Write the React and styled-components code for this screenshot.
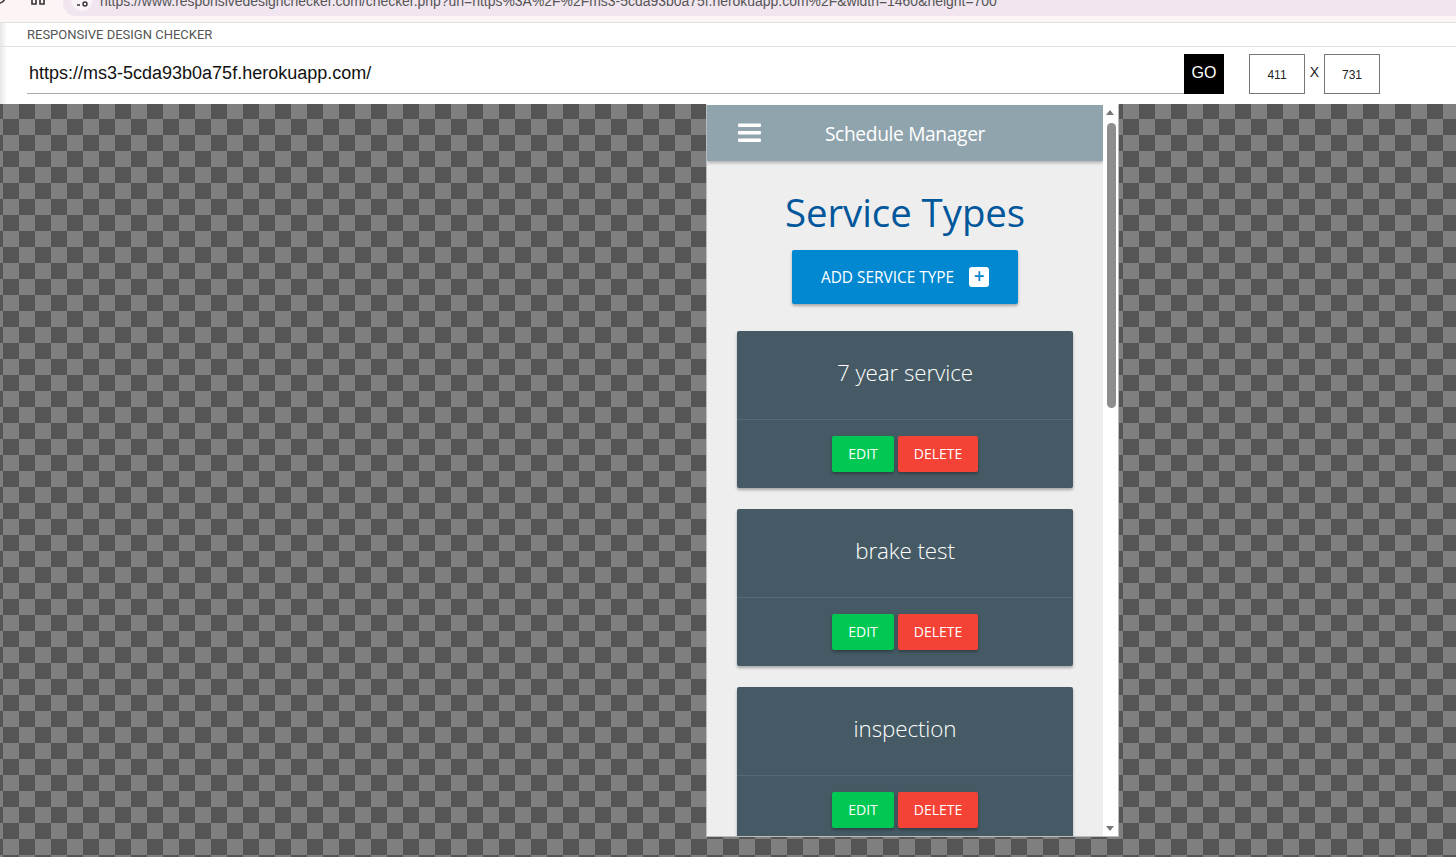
import React from "react";
import styled, { createGlobalStyle } from "styled-components";

const Global = createGlobalStyle`
  html, body { margin: 0; padding: 0; height: 857px; overflow: hidden; background: #fff; }
  #root { height: 857px; }
  * { box-sizing: border-box; }
`;

const Page = styled.div`
  width: 1456px; height: 857px; display: flex; flex-direction: column; overflow: hidden;
  font-family: "Liberation Sans", Arial, sans-serif;
`;
const BrowserBar = styled.div`
  height: 23px; flex: none; display: flex; align-items: flex-end; background: #fdf4f6; border-bottom: 1px solid #e2dfe0;
  padding: 0 0 6px 0; overflow: hidden;
`;
const ReloadIcon = styled.svg` width: 14px; height: 14px; flex: none; margin: 0 0 12px -8px; color: #333; `;
const HomeIcon = styled.svg` width: 14px; height: 14px; flex: none; margin: 0 0 11px 25px; color: #333; `;
const UrlPill = styled.div`
  flex: 1; height: 26px; margin-left: 18px; background: #f1e5ef; border-radius: 13px 0 0 13px; display: flex; align-items: center;
  padding: 0 0 4px 8px; color: #555; font-size: 13.95px; white-space: nowrap; overflow: hidden;
`;
const SiteChip = styled.span`
  width: 22px; height: 24px; flex: none; border-radius: 50%; background: #f9f2f7; margin: -4px 7px 0 0; display: flex; align-items: center; justify-content: center;
`;
const TuneIcon = styled.svg` width: 12px; height: 12px; color: #333; margin-top: 6px; `;
const CheckerTitle = styled.div`
  height: 24px; flex: none; border-bottom: 1px solid #e0e0e0; padding-left: 27px;
  background: linear-gradient(90deg, #e6e6e6, #fff 7px);
  font-family: Roboto, "Liberation Sans", sans-serif; font-size: 13px; line-height: 24px; color: #555;
`;
const Controls = styled.div`
  height: 57px; flex: none; display: flex; padding: 7px 0 0 27px; align-items: flex-start;
  background: linear-gradient(90deg, #e6e6e6, #fff 7px);
`;
const UrlField = styled.div`
  width: 1157px; height: 40px; border-bottom: 1px solid #aaa; padding-left: 2px; font-size: 18px; line-height: 38px; color: #111;
`;
const GoButton = styled.div`
  width: 40px; height: 40px; background: #000; color: #fff; font-size: 16px; text-align: center; line-height: 38px;
`;
const SizeBox = styled.div`
  width: 56px; height: 40px; border: 1px solid #777; font-size: 12px; text-align: center; line-height: 40px; color: #222;
  margin-left: ${p => p.$ml || 0}px;
`;
const Times = styled.span` width: 19px; text-align: center; font-size: 14px; line-height: 37px; color: #222; `;
const Stage = styled.div`
  flex: 1; display: flex; align-items: flex-start; padding-left: 706px; background-color: #7f7f7f;
  background-image: conic-gradient(#7f7f7f 25%, #555 0 50%, #7f7f7f 0 75%, #555 0);
  background-size: 32px 32px; background-position: 19px 103px; background-attachment: fixed;
`;
const DeviceFrame = styled.div`
  width: 413px; height: 733px; border: 1px solid #b9bcbf; border-top: 1px solid #fff; background: #fff; display: flex; overflow: hidden;
`;
const AppView = styled.div`
  width: 396px; flex: none; background: #eee; overflow: hidden; font-family: "Open Sans", "Noto Sans", sans-serif;
`;
const Header = styled.div`
  height: 56px; background: #90a4ae; display: flex; align-items: center; padding-left: 31px; position: relative;
  box-shadow: 0 2px 3px rgba(0,0,0,.25);
`;
const Burger = styled.svg` width: 23px; height: 20px; color: #fff; `;
const Brand = styled.div`
  flex: 1; text-align: center; color: #fff; font-size: 19.2px; letter-spacing: -0.35px; margin-left: -54px;
`;
const Main = styled.div` display: flex; flex-direction: column; align-items: center; padding-top: 25px; `;
const Title = styled.h1`
  margin: 0; height: 64px; font-size: 38.4px; font-weight: 400; line-height: 52px; color: #01579b; letter-spacing: -0.05px;
  font-family: "Open Sans", sans-serif;
`;
const AddButton = styled.div`
  width: 226px; height: 54px; background: #0288d1; color: #fff; border-radius: 2px; display: flex; align-items: center; justify-content: center; gap: 15px;
  font-size: 15.4px; box-shadow: 0 2px 3px rgba(0,0,0,.3); margin-bottom: 27px;
`;
const PlusBox = styled.span`
  width: 20px; height: 20px; background: #fff; border-radius: 3px; color: #0288d1; font-size: 19px; line-height: 19px; text-align: center; font-weight: 600;
`;
const Card = styled.div`
  width: 336px; flex: none; height: 157px; background: #455a64; border-radius: 2px; margin-bottom: 21px; box-shadow: 0 2px 3px rgba(0,0,0,.3);
  display: flex; flex-direction: column;
`;
const CardName = styled.div`
  height: 89px; border-bottom: 1px solid #566b75; color: #fff; text-align: center; font-size: 22.4px; font-weight: 300; line-height: 84px; letter-spacing: -0.1px;
`;
const CardActions = styled.div` flex: 1; display: flex; justify-content: center; padding-top: 16px; gap: 4px; `;
const ActionButton = styled.div`
  height: 36px; width: ${p => p.$w}px; background: ${p => p.$bg}; color: #fff; border-radius: 2px; text-align: center; line-height: 36px; font-size: 14px;
  box-shadow: 0 2px 3px rgba(0,0,0,.3);
`;
const ScrollTrack = styled.div`
  width: 15px; flex: none; background: #fff; display: flex; flex-direction: column; align-items: center; position: relative;
`;
const ScrollThumb = styled.div` width: 9px; height: 285px; background: #8e8e8e; border-radius: 5px; margin-top: 18px; margin-left: 1px; `;
const Arrow = styled.div`
  position: absolute; ${p => p.$down ? "bottom: 5px;" : "top: 5px;"} left: 3px; width: 0; height: 0; border-left: 4px solid transparent; border-right: 4px solid transparent;
  ${p => p.$down ? "border-top: 5px solid #777;" : "border-bottom: 5px solid #777;"}
`;

const services = ["7 year service", "brake test", "inspection"];

export default function App() {
  return (
    <Page>
      <Global />
      <BrowserBar>
        <ReloadIcon viewBox="0 0 14 14" fill="none" stroke="currentColor" strokeWidth="1.5"><circle cx="7" cy="7" r="6" /></ReloadIcon>
        <HomeIcon viewBox="0 0 14 14" fill="none" stroke="currentColor" strokeWidth="1.6"><path d="M1 6.5L7 1l6 5.5V13H9V8H5v5H1z" /></HomeIcon>
        <UrlPill>
          <SiteChip>
            <TuneIcon viewBox="0 0 12 12" fill="none" stroke="currentColor" strokeWidth="1.4"><path d="M1 3h6M1 9h3" /><circle cx="9" cy="8" r="2" /></TuneIcon>
          </SiteChip>
          https://www.responsivedesignchecker.com/checker.php?url=https%3A%2F%2Fms3-5cda93b0a75f.herokuapp.com%2F&width=1460&height=700
        </UrlPill>
      </BrowserBar>
      <CheckerTitle>RESPONSIVE DESIGN CHECKER</CheckerTitle>
      <Controls>
        <UrlField>https://ms3-5cda93b0a75f.herokuapp.com/</UrlField>
        <GoButton>GO</GoButton>
        <SizeBox $ml={25}>411</SizeBox>
        <Times>X</Times>
        <SizeBox>731</SizeBox>
      </Controls>
      <Stage>
        <DeviceFrame>
          <AppView>
            <Header>
              <Burger viewBox="0 0 23 20" fill="currentColor"><rect y="0.5" width="23" height="3.6" rx="1" /><rect y="8" width="23" height="3.6" rx="1" /><rect y="15.5" width="23" height="3.6" rx="1" /></Burger>
              <Brand>Schedule Manager</Brand>
            </Header>
            <Main>
              <Title>Service Types</Title>
              <AddButton>ADD SERVICE TYPE <PlusBox>+</PlusBox></AddButton>
              {services.map(s => (
                <Card key={s}>
                  <CardName>{s}</CardName>
                  <CardActions>
                    <ActionButton $w={62} $bg="#00c853">EDIT</ActionButton>
                    <ActionButton $w={80} $bg="#f44336">DELETE</ActionButton>
                  </CardActions>
                </Card>
              ))}
            </Main>
          </AppView>
          <ScrollTrack>
            <Arrow />
            <ScrollThumb />
            <Arrow $down />
          </ScrollTrack>
        </DeviceFrame>
      </Stage>
    </Page>
  );
}
